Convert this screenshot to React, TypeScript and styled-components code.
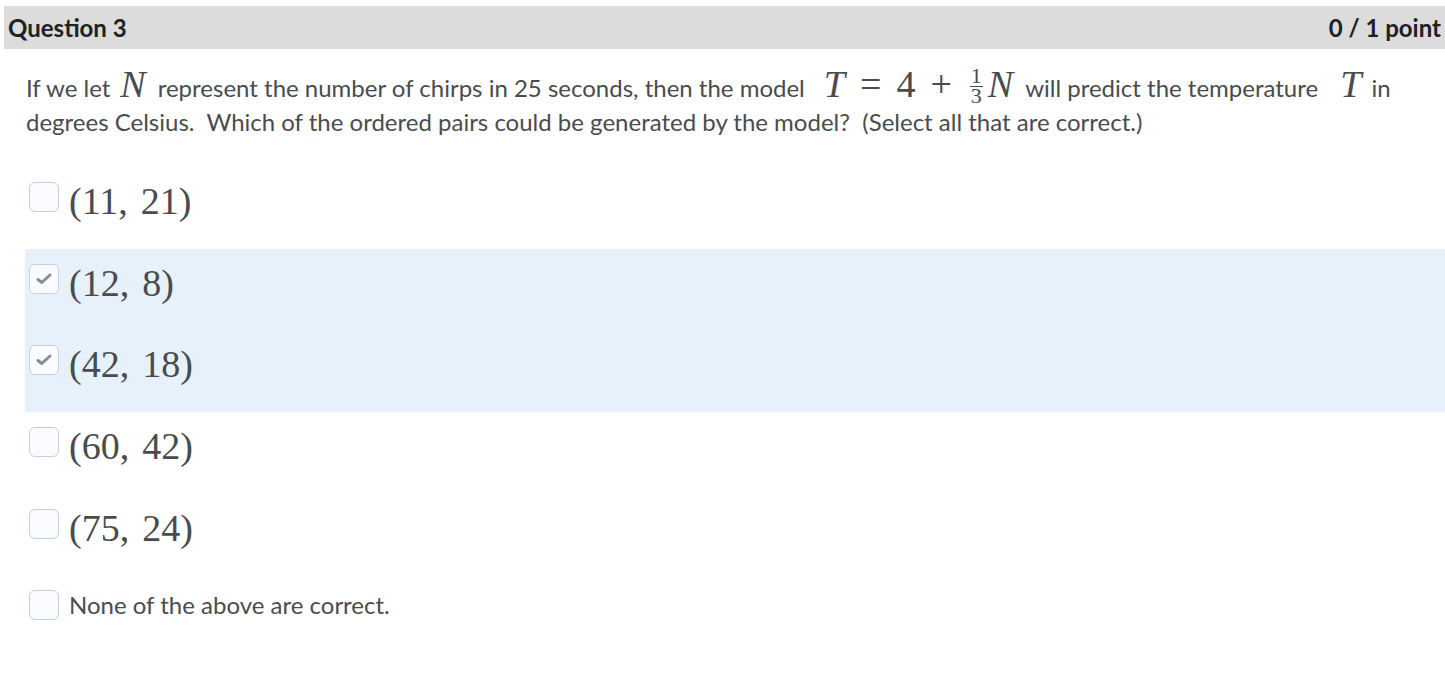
import React from "react";
import styled, { createGlobalStyle } from "styled-components";

const Global = createGlobalStyle`
  html, body { margin: 0; padding: 0; background: #ffffff; }
  body { font-family: Lato, "Noto Sans", sans-serif; }
`;

const Page = styled.div`
  padding: 6px 0 0 4px;
  display: flex;
  flex-direction: column;
`;

const Header = styled.div`
  height: 43px;
  background: #dcdcdc;
  display: flex;
  align-items: center;
  justify-content: space-between;
  padding: 0 4px 0 4px;
  font-family: Lato, sans-serif;
  font-weight: 700;
  font-size: 24px;
  color: #202122;
`;

const Prompt = styled.p`
  margin: 22px 20px 0 22px;
  font-family: Lato, sans-serif;
  font-size: 24px;
  line-height: 34px;
  color: #494c4e;
`;

const MathI = styled.span<{ $l?: number; $r?: number }>`
  font-family: "Liberation Serif", "DejaVu Serif", serif;
  font-style: italic;
  font-size: 38px;
  line-height: 0;
  color: #494c4e;
  margin: 0 ${(p) => p.$r ?? 8}px 0 ${(p) => p.$l ?? 8}px;
`;

const MathInline = styled.span`
  font-family: "Liberation Serif", "DejaVu Serif", serif;
  font-size: 38px;
  line-height: 0;
  color: #494c4e;
  margin: 0 12px 0 19px;
  white-space: nowrap;
`;

const Op = styled.span`
  margin: 0 15px;
`;

const Frac = styled.span`
  display: inline-flex;
  flex-direction: column;
  align-items: center;
  vertical-align: 14px;
  font-size: 22px;
  line-height: 14px;
  margin: -4px 5px 0 3px;
`;

const FracBar = styled.span`
  display: block;
  width: 13px;
  height: 1px;
  background: #494c4e;
  margin: 3px 0 2px;
`;

const Options = styled.div`
  margin-top: 28px;
  display: flex;
  flex-direction: column;
`;

const Row = styled.label<{ $selected?: boolean }>`
  box-sizing: border-box;
  height: 81.7px;
  margin-left: 21px;
  padding: 15px 4px 0 4px;
  display: flex;
  align-items: flex-start;
  gap: 10px;
  background: ${(p) => (p.$selected ? "#e7f1fb" : "transparent")};
`;

const Box = styled.span`
  box-sizing: border-box;
  flex: none;
  width: 30px;
  height: 30px;
  border: 1px solid #c9cfd4;
  border-radius: 6px;
  background: #f9fbfe;
  display: flex;
  align-items: center;
  justify-content: center;
`;

const Pair = styled.span`
  font-family: "Liberation Serif", "DejaVu Serif", serif;
  font-size: 38px;
  line-height: 38px;
  color: #494c4e;
  white-space: nowrap;
`;

const Comma = styled.span`
  margin-right: 13px;
`;

const OptText = styled.span`
  font-family: Lato, sans-serif;
  font-size: 24px;
  line-height: 30px;
  color: #494c4e;
`;

function Check() {
  return (
    <svg width="18" height="14" viewBox="0 0 18 14" fill="none">
      <path
        d="M3 7.5 L6.8 10.5 L15 3"
        stroke="#898b8d"
        strokeWidth="3"
        strokeLinecap="round"
        strokeLinejoin="round"
      />
    </svg>
  );
}

const pairs: { a: string; b: string; sel: boolean }[] = [
  { a: "11", b: "21", sel: false },
  { a: "12", b: "8", sel: true },
  { a: "42", b: "18", sel: true },
  { a: "60", b: "42", sel: false },
  { a: "75", b: "24", sel: false },
];

export default function App() {
  return (
    <>
      <Global />
      <Page>
        <Header>
          <span>Question 3</span>
          <span>0 / 1 point</span>
        </Header>
        <Prompt>
          If we let<MathI $l={10} $r={12}>N</MathI>represent the number of chirps in 25 seconds, then the
          model
          <MathInline>
            <i>T</i>
            <Op>=</Op>4<Op>+</Op>
            <Frac>
              <span>1</span>
              <FracBar />
              <span>3</span>
            </Frac>
            <i>N</i>
          </MathInline>
          will predict the temperature <MathI $l={16} $r={10}>T</MathI>in degrees Celsius.&nbsp; Which of
          the ordered pairs could be generated by the model?&nbsp; (Select all that are correct.)
        </Prompt>
        <Options>
          {pairs.map((p) => (
            <Row key={p.a + p.b} $selected={p.sel}>
              <Box>{p.sel && <Check />}</Box>
              <Pair>
                ({p.a}
                <Comma>,</Comma>
                {p.b})
              </Pair>
            </Row>
          ))}
          <Row>
            <Box />
            <OptText>None of the above are correct.</OptText>
          </Row>
        </Options>
      </Page>
    </>
  );
}
